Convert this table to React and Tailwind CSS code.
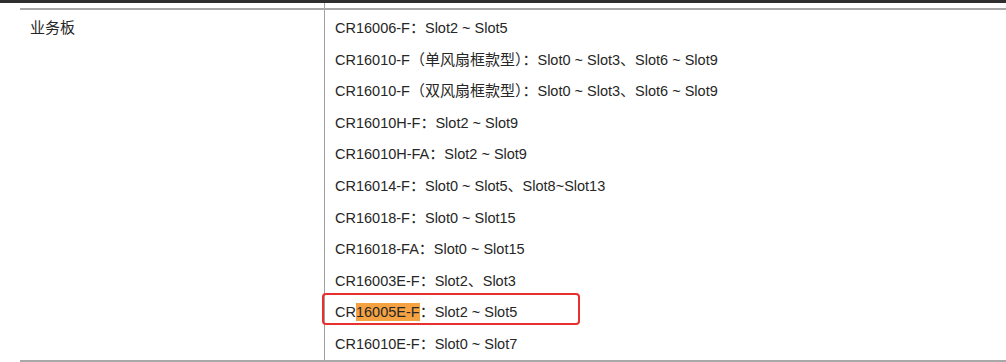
import React from "react";

// 业务板可插槽位清单
const rows = [
  { model: "CR16006-F", slots: "Slot2 ~ Slot5" },
  { model: "CR16010-F（单风扇框款型）", slots: "Slot0 ~ Slot3、Slot6 ~ Slot9" },
  { model: "CR16010-F（双风扇框款型）", slots: "Slot0 ~ Slot3、Slot6 ~ Slot9" },
  { model: "CR16010H-F", slots: "Slot2 ~ Slot9" },
  { model: "CR16010H-FA", slots: "Slot2 ~ Slot9" },
  { model: "CR16014-F", slots: "Slot0 ~ Slot5、Slot8~Slot13" },
  { model: "CR16018-F", slots: "Slot0 ~ Slot15" },
  { model: "CR16018-FA", slots: "Slot0 ~ Slot15" },
  { model: "CR16003E-F", slots: "Slot2、Slot3" },
  { model: "CR16005E-F", slots: "Slot2 ~ Slot5", marked: true },
  { model: "CR16010E-F", slots: "Slot0 ~ Slot7" },
];

// 中文与全角标点用稍大一号显示
const Mixed = ({ text }) =>
  text.split(/([\u3000-\u9fff\uff00-\uffef]+)/).map((part, i) =>
    /[\u3000-\u9fff\uff00-\uffef]/.test(part) ? (
      <span key={i} className="text-[15px]">
        {part}
      </span>
    ) : (
      part
    )
  );

const SlotRow = ({ item }) => {
  if (item.marked) {
    return (
      <div className="relative h-[31.6px] leading-[31.6px] whitespace-nowrap">
        CR<span className="bg-[#f5a243] py-[1px]">{item.model.slice(2)}</span>
        <Mixed text={"：" + item.slots} />
        <div className="absolute -left-[13px] -top-[3px] w-[258px] h-[32px] border-2 border-[#e8302f] rounded-[4px]" />
      </div>
    );
  }
  return (
    <div className="h-[31.6px] leading-[31.6px] whitespace-nowrap">
      <Mixed text={item.model + "：" + item.slots} />
    </div>
  );
};

export default function App() {
  return (
    <div
      className="w-[1006px] h-[362px] bg-white overflow-hidden text-[14.5px] text-[#262626]"
      style={{ fontFamily: '"Liberation Sans", Arial, "Noto Sans CJK SC", sans-serif' }}
    >
      <div className="h-[3px] bg-[#2e2e2e]" />
      <div className="h-[5px] flex">
        <div className="w-[325px] border-r border-[#a0a0a0]" />
      </div>
      <div className="ml-[20px] flex border-t-2 border-b-2 border-[#a8a8a8]">
        <div className="w-[305px] shrink-0 border-r border-[#a0a0a0] pl-[10px] pt-[2px] leading-[31.6px] text-[15px]">
          业务板
        </div>
        <div className="pl-[10px] pt-[2px]">
          {rows.map((item, idx) => (
            <SlotRow key={idx} item={item} />
          ))}
        </div>
      </div>
    </div>
  );
}
